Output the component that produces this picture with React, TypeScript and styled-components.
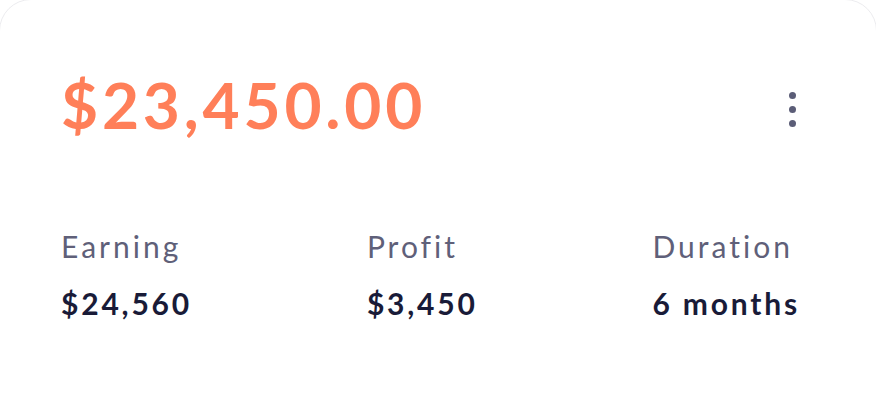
import React from "react";
import styled, { createGlobalStyle } from "styled-components";

const Global = createGlobalStyle`
  html, body {
    margin: 0;
    padding: 0;
    background: #ffffff;
    overflow: hidden;
  }
  body {
    font-family: Lato, "Liberation Sans", sans-serif;
  }
`;

const Card = styled.section`
  box-sizing: border-box;
  margin: -1px -1px 0;
  min-height: 460px;
  background: #ffffff;
  border: 1px solid #ececef;
  border-radius: 32px;
  padding: 73px 76px 0 61px;
`;

const Header = styled.div`
  display: flex;
  align-items: flex-start;
  justify-content: space-between;
`;

const Amount = styled.h1`
  margin: 0;
  font-size: 64px;
  line-height: 1;
  font-weight: 700;
  color: #ff7f59;
  letter-spacing: 3.8px;
`;

const MenuButton = styled.button`
  display: flex;
  flex-direction: column;
  align-items: center;
  gap: 7px;
  padding: 0;
  margin-top: 19px;
  margin-right: 4px;
  border: none;
  background: transparent;
  cursor: pointer;
`;

const Dot = styled.span`
  width: 7px;
  height: 7px;
  border-radius: 50%;
  background: #5b5d77;
`;

const Stats = styled.div`
  display: flex;
  justify-content: space-between;
  margin-top: 94px;
`;

const Stat = styled.div`
  display: flex;
  flex-direction: column;
  gap: 27px;
`;

const Label = styled.span`
  font-size: 30px;
  line-height: 1;
  font-weight: 400;
  color: #5f6079;
  letter-spacing: 3px;
`;

const Value = styled.span`
  font-size: 30px;
  line-height: 1;
  font-weight: 700;
  color: #191b38;
  letter-spacing: 2.8px;
`;

const stats = [
  { label: "Earning", value: "$24,560" },
  { label: "Profit", value: "$3,450" },
  { label: "Duration", value: "6 months" },
];

export default function App() {
  return (
    <>
      <Global />
      <Card>
        <Header>
          <Amount>$23,450.00</Amount>
          <MenuButton aria-label="More options">
            <Dot />
            <Dot />
            <Dot />
          </MenuButton>
        </Header>
        <Stats>
          {stats.map((s) => (
            <Stat key={s.label}>
              <Label>{s.label}</Label>
              <Value>{s.value}</Value>
            </Stat>
          ))}
        </Stats>
      </Card>
    </>
  );
}
